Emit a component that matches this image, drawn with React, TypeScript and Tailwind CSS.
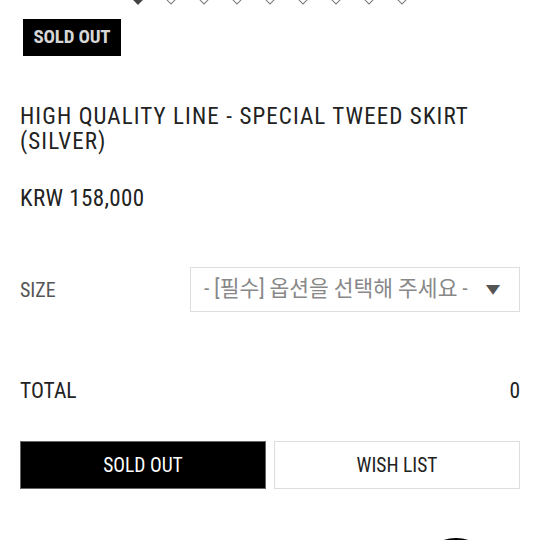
const Diamond = ({ filled }: { filled?: boolean }) => (
  <span
    className={
      "block w-[8px] h-[8px] rotate-45 border-[1.5px] " +
      (filled ? "bg-[#444] border-[#444]" : "bg-white border-[#777]")
    }
  />
)

export default function App() {
  return (
    <div
      className="relative w-[540px] h-[540px] overflow-hidden bg-white text-[#222] [font-stretch:condensed]"
      style={{ fontFamily: "Roboto, 'Noto Sans CJK KR', sans-serif" }}
    >
      {/* slider dots */}
      <div className="flex justify-center gap-[25px] -mt-[5px] h-[6px]">
        {Array.from({ length: 9 }).map((_, i) => (
          <Diamond key={i} filled={i === 0} />
        ))}
      </div>

      <div className="px-5">
        <div className="mt-[18px] ml-[3px] w-[98px] h-[37px] bg-black flex items-center justify-center">
          <span className="text-[#d6d6d6] text-[19px] font-bold tracking-[-0.2px]">SOLD OUT</span>
        </div>

        <h1 className="mt-[48px] text-[23px] leading-[25px] tracking-[1.1px] font-normal">
          HIGH QUALITY LINE - SPECIAL TWEED SKIRT
          <br />
          (SILVER)
        </h1>

        <p className="mt-[33px] text-[23px] leading-6 tracking-[0.4px]">KRW 158,000</p>

        <div className="mt-[56px] flex items-center">
          <span className="w-[170px] text-[20px] text-[#555]">SIZE</span>
          <div className="flex-1 h-[45px] border border-[#ddd] flex items-center justify-between pl-[13px] pr-[20px]">
            <span className="text-[21.5px] text-[#888]">- [필수] 옵션을 선택해 주세요 -</span>
            <span className="text-[12px] text-[#555] scale-x-125">▼</span>
          </div>
        </div>

        <div className="mt-[63px] flex items-center justify-between text-[21.5px]">
          <span>TOTAL</span>
          <span>0</span>
        </div>

        <div className="mt-[34px] flex gap-2">
          <button className="flex-1 h-[48px] bg-black border border-[#666] text-white text-[19.5px]">
            SOLD OUT
          </button>
          <button className="flex-1 h-[48px] bg-white border border-[#ddd] text-[#222] text-[19.5px]">
            WISH LIST
          </button>
        </div>
      </div>

      <div className="flex justify-end pr-[44px] mt-[49px]">
        <div className="w-20 h-20 rounded-full bg-black" />
      </div>
    </div>
  )
}
